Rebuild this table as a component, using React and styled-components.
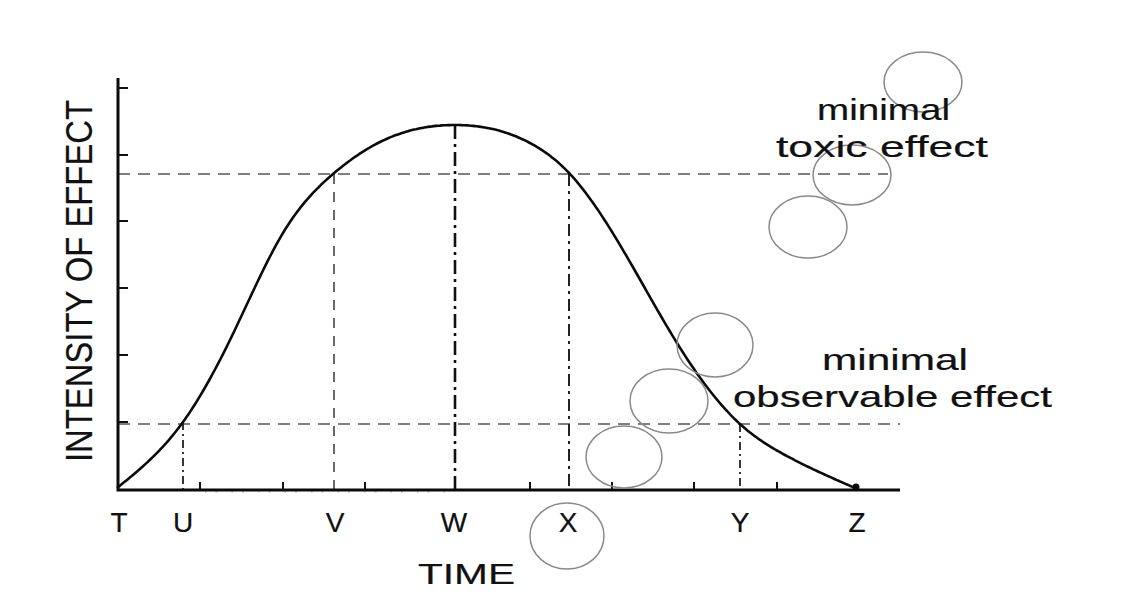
import React from 'react'
import styled, { createGlobalStyle } from 'styled-components'

const GlobalStyle = createGlobalStyle`
  html, body {
    margin: 0;
    padding: 0;
    background: #fff;
  }
  body {
    font-family: "Liberation Sans", Arial, sans-serif;
  }
`

// measured from the plot: points the effect curve passes through
const curvePoints = [
  [117, 488], [183, 422], [230, 340], [283, 233], [333, 174], [380, 142],
  [455, 125], [530, 143], [570, 174], [620, 245], [677, 343], [740, 424],
  [785, 455], [855, 488],
]

const yTicks = [88, 155, 221, 288, 355, 422]
const xTicks = [200, 283, 365, 530, 612, 694, 777]

const timeMarks = [
  { label: 'T', x: 119 },
  { label: 'U', x: 183 },
  { label: 'V', x: 335 },
  { label: 'W', x: 454 },
  { label: 'X', x: 568 },
  { label: 'Y', x: 740 },
  { label: 'Z', x: 857 },
]

const guides = [
  { x1: 118, y1: 174, x2: 888, y2: 174, dash: '12 8', tone: '#555', weight: 1.6 },
  { x1: 118, y1: 424, x2: 900, y2: 424, dash: '12 8', tone: '#555', weight: 1.6 },
  { x1: 183, y1: 422, x2: 183, y2: 490, dash: '8 4 2 4', tone: '#222', weight: 1.8 },
  { x1: 334, y1: 174, x2: 334, y2: 490, dash: '10 8', tone: '#444', weight: 1.6 },
  { x1: 455, y1: 125, x2: 455, y2: 490, dash: '14 5 3 5', tone: '#111', weight: 2.6 },
  { x1: 569, y1: 174, x2: 569, y2: 490, dash: '12 5 3 5', tone: '#222', weight: 2 },
  { x1: 740, y1: 424, x2: 740, y2: 490, dash: '8 4 2 4', tone: '#222', weight: 1.8 },
]

const rings = [
  { cx: 923, cy: 82, rx: 39, ry: 30 },
  { cx: 852, cy: 175, rx: 39, ry: 30 },
  { cx: 808, cy: 227, rx: 39, ry: 31 },
  { cx: 715, cy: 345, rx: 38, ry: 32 },
  { cx: 669, cy: 401, rx: 39, ry: 32 },
  { cx: 624, cy: 457, rx: 38, ry: 31 },
  { cx: 567, cy: 536, rx: 37, ry: 33 },
]

const notes = [
  { text: 'minimal', x: 817, y: 120, length: 133 },
  { text: 'toxic effect', x: 776, y: 157, length: 212 },
  { text: 'minimal', x: 822, y: 370, length: 146 },
  { text: 'observable effect', x: 733, y: 407, length: 319 },
]

// natural cubic spline y(x), sampled into a polyline
function splinePath(pts, step = 2) {
  const n = pts.length
  const xs = pts.map((p) => p[0])
  const ys = pts.map((p) => p[1])
  const h = xs.slice(0, -1).map((x, i) => xs[i + 1] - x)
  const m = new Array(n).fill(0)
  const a = [], b = [], c = [], r = []
  for (let i = 1; i < n - 1; i++) {
    a.push(h[i - 1])
    b.push(2 * (h[i - 1] + h[i]))
    c.push(h[i])
    r.push(6 * ((ys[i + 1] - ys[i]) / h[i] - (ys[i] - ys[i - 1]) / h[i - 1]))
  }
  // thomas algorithm
  for (let i = 1; i < b.length; i++) {
    const w = a[i] / b[i - 1]
    b[i] -= w * c[i - 1]
    r[i] -= w * r[i - 1]
  }
  const sol = new Array(b.length)
  for (let i = b.length - 1; i >= 0; i--) {
    sol[i] = (r[i] - (i < b.length - 1 ? c[i] * sol[i + 1] : 0)) / b[i]
  }
  sol.forEach((v, i) => { m[i + 1] = v })

  const out = []
  for (let i = 0; i < n - 1; i++) {
    const x0 = xs[i], x1 = xs[i + 1], hi = h[i]
    for (let x = x0; x < x1; x += step) {
      const A = x1 - x, B = x - x0
      const y = (m[i] * A ** 3 + m[i + 1] * B ** 3) / (6 * hi) +
        (ys[i] / hi - (m[i] * hi) / 6) * A +
        (ys[i + 1] / hi - (m[i + 1] * hi) / 6) * B
      out.push(`${x.toFixed(1)} ${y.toFixed(1)}`)
    }
  }
  out.push(`${xs[n - 1]} ${ys[n - 1]}`)
  return 'M ' + out.join(' L ')
}

export default function App() {
  return (
    <>
      <GlobalStyle />
      <Figure>
        <Chart viewBox="0 0 1128 612" role="img" aria-label="Intensity of effect over time">
          {guides.map((g, i) => (
            <Guide
              key={i}
              x1={g.x1}
              y1={g.y1}
              x2={g.x2}
              y2={g.y2}
              $dash={g.dash}
              $tone={g.tone}
              $weight={g.weight}
            />
          ))}

          <Speckle x1={205} y1={492} x2={450} y2={492} />
          <Axis d="M 118 78 L 118 490 L 900 490" />
          {yTicks.map((y) => (
            <Tick key={y} x1={118} y1={y} x2={128} y2={y} />
          ))}
          {xTicks.map((x) => (
            <Tick key={x} x1={x} y1={490} x2={x} y2={482} />
          ))}

          <Curve d={splinePath(curvePoints)} />
          <EndDot cx={856} cy={487} r={3.5} />

          {rings.map((r, i) => (
            <Ring key={i} cx={r.cx} cy={r.cy} rx={r.rx} ry={r.ry} />
          ))}

          {notes.map((n, i) => (
            <Label
              key={i}
              x={n.x}
              y={n.y}
              textLength={n.length}
              lengthAdjust="spacingAndGlyphs"
              $size={29}
            >
              {n.text}
            </Label>
          ))}

          {timeMarks.map((m) => (
            <Label key={m.label} x={m.x} y={532} textAnchor="middle" $size={28}>
              {m.label}
            </Label>
          ))}

          <Label x={418} y={584} textLength={97} lengthAdjust="spacingAndGlyphs" $size={30}>
            TIME
          </Label>

          <Label
            x={92}
            y={462}
            transform="rotate(-90 92 462)"
            textLength={362}
            lengthAdjust="spacingAndGlyphs"
            $size={36}
          >
            INTENSITY OF EFFECT
          </Label>
        </Chart>
      </Figure>
    </>
  )
}

const Figure = styled.figure`
  margin: 0;
  width: 1128px;
  height: 612px;
  background: #fff;
  overflow: hidden;
`

const Chart = styled.svg`
  display: block;
  width: 1128px;
  height: 612px;
`

const Axis = styled.path`
  fill: none;
  stroke: #0a0a0a;
  stroke-width: 3;
`

const Tick = styled.line`
  stroke: #111;
  stroke-width: 2;
`

const Speckle = styled.line`
  stroke: #aaa;
  stroke-width: 1.2;
  stroke-dasharray: 1.5 9 2 14;
`

const Guide = styled.line`
  fill: none;
  stroke: ${(p) => p.$tone};
  stroke-width: ${(p) => p.$weight};
  stroke-dasharray: ${(p) => p.$dash};
`

const Curve = styled.path`
  fill: none;
  stroke: #0b0b0b;
  stroke-width: 2.6;
  stroke-linejoin: round;
`

const EndDot = styled.circle`
  fill: #0b0b0b;
`

const Ring = styled.ellipse`
  fill: none;
  stroke: #8a8a8a;
  stroke-width: 1.5;
`

const Label = styled.text`
  font-family: "Liberation Sans", Arial, sans-serif;
  font-size: ${(p) => p.$size}px;
  fill: #111;
  stroke: #111;
  stroke-width: 0.2;
`
